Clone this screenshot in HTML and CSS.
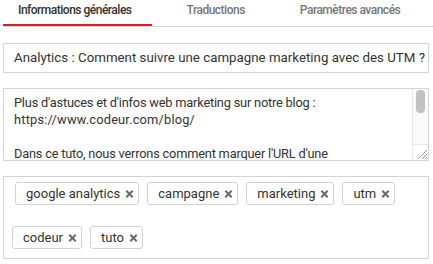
FILE: index.html
```html
<!DOCTYPE html>
<html lang="fr">
<head>
<meta charset="utf-8">
<link rel="stylesheet" href="styles.css">
</head>
<body>
<div class="page">
  <nav class="tabs">
    <div class="tab active">Informations générales</div>
    <div class="tab">Traductions</div>
    <div class="tab">Paramètres avancés</div>
  </nav>
  <div class="field title">Analytics : Comment suivre une campagne marketing avec des UTM ?</div>
  <div class="field area">
    <div class="area-text">Plus d'astuces et d'infos web marketing sur notre blog :<br><span class="url">https://www.codeur.com/blog/</span><br><br>Dans ce tuto, nous verrons comment marquer l'URL d'une campagne marketing.</div>
    <div class="scrollbar">
      <div class="track"><div class="thumb"></div></div>
      <div class="grip">
        <svg width="14" height="14" viewBox="0 0 14 14"><path d="M13 4L4 13M13 8L8 13M13 11L11 13" stroke="#9a9a9a" stroke-width="1" fill="none"/></svg>
      </div>
    </div>
  </div>
  <div class="field tags">
    <span class="tag first">google analytics<i class="x"></i></span>
    <span class="tag">campagne<i class="x"></i></span>
    <span class="tag">marketing<i class="x"></i></span>
    <span class="tag">utm<i class="x"></i></span>
    <span class="tag">codeur<i class="x"></i></span>
    <span class="tag">tuto<i class="x"></i></span>
  </div>
</div>
</body>
</html>
```
FILE: styles.css
```css
html, body {
  margin: 0;
  padding: 0;
  background: #fff;
}
body {
  font-family: Roboto, "Liberation Sans", sans-serif;
  color: #333;
  width: 433px;
  height: 264px;
  overflow: hidden;
}
.page {
  padding: 0 5px 0 3px;
}
.tabs {
  display: flex;
  gap: 20px;
  height: 26px;
  border-bottom: 1px solid #d6d6d6;
  margin-right: -5px;
  overflow: hidden;
}
.tab {
  font-size: 12px;
  letter-spacing: -0.5px;
  line-height: 21px;
  height: 24px;
  padding: 0 20px 0 15px;
  color: #777;
  font-weight: 500;
  box-sizing: border-box;
  white-space: nowrap;
  flex: none;
}
.tab.active {
  color: #333;
  height: 27px;
  border-bottom: 3px solid #d41d24;
  margin-bottom: -1px;
}
.field {
  border: 1px solid #d4d4d4;
  box-sizing: border-box;
  width: 426px;
}
.title {
  margin-top: 16px;
  height: 30px;
  font-size: 13.3px;
  line-height: 28px;
  padding: 0 10px;
  white-space: nowrap;
  overflow: hidden;
}
.area {
  margin-top: 15px;
  height: 73px;
  display: flex;
}
.area-text {
  flex: 1;
  font-size: 12.8px;
  letter-spacing: -0.2px;
  line-height: 17px;
  padding: 5px 30px 0 10px;
  overflow: hidden;
}
.url {
  letter-spacing: 0.2px;
}
.scrollbar {
  width: 15px;
  flex: none;
  border-left: 1px solid #e8e8e8;
  background: #fafafa;
  display: flex;
  flex-direction: column;
}
.track {
  flex: 1;
  padding: 1px 3px 0 3px;
}
.thumb {
  height: 23px;
  background: #c1c1c1;
  border-radius: 4px;
}
.grip {
  height: 15px;
  border-top: 1px solid #e8e8e8;
  background: #fff;
  display: flex;
  justify-content: flex-end;
  align-items: flex-end;
}
.grip svg {
  display: block;
}
.tags {
  margin-top: 15px;
  height: 83px;
  display: flex;
  flex-wrap: wrap;
  align-content: flex-start;
  column-gap: 8px;
  row-gap: 21px;
  padding: 5px 8px 0 8px;
}
.tag {
  display: inline-flex;
  align-items: center;
  height: 23px;
  box-sizing: border-box;
  border: 1px solid #d2d2d2;
  border-radius: 3px;
  padding: 0 5px 0 10px;
  font-size: 13px;
  color: #333;
}
.tag.first {
  margin-left: 3px;
}
.x {
  display: inline-block;
  width: 7px;
  height: 7px;
  margin-left: 6px;
  position: relative;
}
.x::before, .x::after {
  content: "";
  position: absolute;
  left: -1px;
  top: 2.5px;
  width: 9px;
  height: 2px;
  background: #6a6a6a;
  transform: rotate(45deg);
}
.x::after {
  transform: rotate(-45deg);
}
```
